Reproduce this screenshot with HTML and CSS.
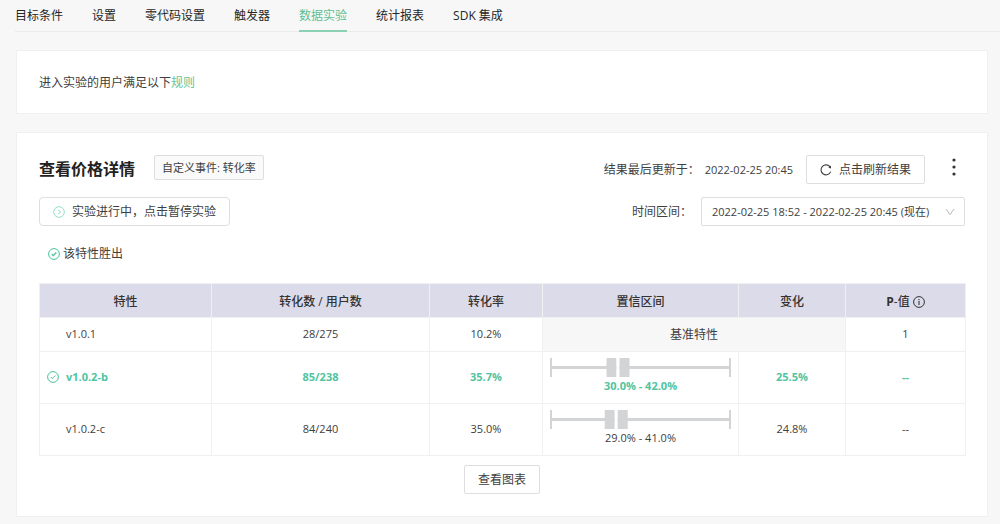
FILE: index.html
```html
<!DOCTYPE html>
<html lang="zh-CN">
<head>
<meta charset="utf-8">
<title>数据实验</title>
<link rel="stylesheet" href="styles.css">
</head>
<body>
<nav class="tabs">
  <a class="tab" href="#target">目标条件</a>
  <a class="tab" href="#settings">设置</a>
  <a class="tab" href="#zero-code">零代码设置</a>
  <a class="tab" href="#triggers">触发器</a>
  <a class="tab tab-active" href="#experiments" aria-current="page">数据实验</a>
  <a class="tab" href="#reports">统计报表</a>
  <a class="tab" href="#sdk">SDK 集成</a>
</nav>
<main class="page">
  <section class="card rule">进入实验的用户满足以下<a class="link" href="#rules">规则</a></section>

  <section class="card experiment">
    <div class="toolbar">
      <div class="group heading">
        <h1 class="title">查看价格详情</h1>
        <span class="tag">自定义事件: 转化率</span>
      </div>
      <div class="group">
        <span>结果最后更新于：</span>
        <time class="time" datetime="2022-02-25T20:45">2022-02-25 20:45</time>
        <button class="button refresh" type="button">
          <svg class="icon" viewBox="0 0 12 12" aria-hidden="true"><path d="M10.2 3.1A5 5 0 1 0 10.7 7.6" fill="none" stroke="#404040" stroke-width="1.1"/><path d="M11 1.4V4.4L8.3 3.7z" fill="#404040"/></svg>
          点击刷新结果
        </button>
        <button class="more" type="button" aria-label="更多">
          <svg width="4" height="18" viewBox="0 0 4 18" aria-hidden="true"><g fill="#333"><circle cx="2" cy="2" r="1.6"/><circle cx="2" cy="9" r="1.6"/><circle cx="2" cy="16" r="1.6"/></g></svg>
        </button>
      </div>
    </div>

    <div class="toolbar second">
      <button class="button pause" type="button">
        <svg class="icon" viewBox="0 0 12 12" aria-hidden="true"><g fill="none" stroke="#96e0c2"><circle cx="6" cy="6" r="5.3"/><path d="M5 4L7.6 6L5 8"/></g></svg>
        实验进行中，点击暂停实验
      </button>
      <div class="group range">
        <label for="range">时间区间：</label>
        <div class="select-box">
          <select class="select" id="range">
            <option>2022-02-25 18:52 - 2022-02-25 20:45 (现在)</option>
          </select>
          <svg class="chevron" viewBox="0 0 10 8" aria-hidden="true"><path d="M1 1L5 6.6L9 1" fill="none" stroke="#b8b8b8"/></svg>
        </div>
      </div>
    </div>

    <p class="legend">
      <svg class="icon" viewBox="0 0 12 12" aria-hidden="true"><g fill="none" stroke="#48c39b"><circle cx="6" cy="6" r="5.4"/><path d="M3.8 6L5.4 7.6L8.3 4.5" stroke-width="1.2"/></g></svg>
      该特性胜出
    </p>

    <table class="results">
      <colgroup>
        <col class="col-feature"><col class="col-users"><col class="col-rate"><col class="col-interval"><col class="col-change"><col class="col-p">
      </colgroup>
      <thead>
        <tr>
          <th>特性</th>
          <th>转化数 / 用户数</th>
          <th>转化率</th>
          <th>置信区间</th>
          <th>变化</th>
          <th><span class="with-icon"><span><b>P</b>-值</span><svg class="icon" viewBox="0 0 12 12" aria-hidden="true"><circle cx="6" cy="6" r="5.4" fill="none" stroke="#333"/><path d="M6 5.1V9M6 3V4.2" stroke="#333" stroke-width="1.1"/></svg></span></th>
        </tr>
      </thead>
      <tbody>
        <tr>
          <td><div class="feature"><span class="mark"></span>v1.0.1</div></td>
          <td>28/275</td>
          <td>10.2%</td>
          <td class="baseline" colspan="2">基准特性</td>
          <td>1</td>
        </tr>
        <tr class="winner">
          <td><div class="feature"><span class="mark"><svg class="icon" viewBox="0 0 12 12" role="img" aria-label="胜出"><g fill="none" stroke="#48c39b"><circle cx="6" cy="6" r="5.4"/><path d="M3.8 6L5.4 7.6L8.3 4.5"/></g></svg></span>v1.0.2-b</div></td>
          <td>85/238</td>
          <td>35.7%</td>
          <td>
            <svg class="gauge" aria-hidden="true"><rect y="8" width="100%" height="3"/><rect width="2" height="19"/><svg x="100%" overflow="visible"><rect x="-2" width="2" height="19"/></svg><svg x="34%" overflow="visible"><rect x="-5" width="10" height="19"/><rect class="gap" x="5" width="3" height="19"/><rect x="8" width="10" height="19"/></svg></svg>
            <div>30.0% - 42.0%</div>
          </td>
          <td>25.5%</td>
          <td>--</td>
        </tr>
        <tr>
          <td><div class="feature"><span class="mark"></span>v1.0.2-c</div></td>
          <td>84/240</td>
          <td>35.0%</td>
          <td>
            <svg class="gauge" aria-hidden="true"><rect y="8" width="100%" height="3"/><rect width="2" height="19"/><svg x="100%" overflow="visible"><rect x="-2" width="2" height="19"/></svg><svg x="33%" overflow="visible"><rect x="-5" width="10" height="19"/><rect class="gap" x="5" width="3" height="19"/><rect x="8" width="10" height="19"/></svg></svg>
            <div>29.0% - 41.0%</div>
          </td>
          <td>24.8%</td>
          <td>--</td>
        </tr>
      </tbody>
    </table>

    <div class="footer"><button class="button" type="button">查看图表</button></div>
  </section>
</main>
</body>
</html>
```
FILE: styles.css
```css
* {
  box-sizing: border-box;
}

body {
  margin: 0;
  background: #f7f7f7;
  color: #404040;
  font: 12px/18px "Open Sans", "Noto Sans CJK SC", sans-serif;
}

.tabs {
  display: flex;
  gap: 29px;
  height: 32px;
  margin-left: 15px;
  border-bottom: 1px solid #ebebeb;
}

.tab {
  height: 32px;
  padding-top: 7px;
  color: #262626;
  text-decoration: none;
}

.tab-active {
  border-bottom: 2px solid #8ad0b1;
  color: #5dbf94;
}

.page {
  display: flex;
  flex-direction: column;
  gap: 18px;
  padding: 18px 12px 8px 16px;
}

.card {
  padding: 22px;
  border: 1px solid #f0f0f0;
  background: #fff;
}

.rule {
  padding: 23px 22px 21px;
}

.link {
  color: #5fc495;
  text-decoration: none;
}

.toolbar,
.group {
  display: flex;
  align-items: center;
}

.toolbar {
  justify-content: space-between;
}

.second {
  margin-top: 13px;
}

.heading {
  align-items: flex-start;
  gap: 19px;
}

.range {
  gap: 9px;
}

.title {
  margin: 0;
  color: #222;
  font-size: 16px;
  line-height: 29px;
}

.tag {
  padding: 3px 7px 2px;
  border: 1px solid #dedede;
  border-radius: 2px;
  background: #fafafa;
  font-size: 11px;
}

.time {
  margin: 0 13px 0 5px;
  font-size: 11px;
}

.button {
  display: inline-flex;
  align-items: center;
  height: 29px;
  padding: 0 13px;
  border: 1px solid #dedede;
  border-radius: 2px;
  background: #fff;
  color: #404040;
  font: inherit;
}

.refresh {
  gap: 7px;
}

.pause {
  gap: 7px;
  border-radius: 4px;
}

.more {
  display: flex;
  margin: 0 9px 6px 18px;
  padding: 0 0 0 9px;
  border: 0;
  background: none;
}

.icon {
  display: block;
  flex: none;
  width: 12px;
  height: 12px;
}

.select-box {
  position: relative;
}

.select {
  display: block;
  width: 264px;
  height: 29px;
  padding: 0 24px 0 10px;
  appearance: none;
  border: 1px solid #dedede;
  border-radius: 2px;
  background: #fff;
  color: #404040;
  font: inherit;
  font-size: 11px;
}

.chevron {
  position: absolute;
  top: 11px;
  right: 10px;
  width: 10px;
  height: 8px;
  pointer-events: none;
}

.legend {
  display: flex;
  align-items: center;
  gap: 3px;
  margin: 19px 0 20px 9px;
}

.results {
  width: 100%;
  table-layout: fixed;
  border-collapse: collapse;
  font-size: 11px;
  text-align: center;
}

.results th,
.results td {
  height: 34px;
  padding: 6px 7px 8px;
  border: 1px solid #f0f0f0;
}

.results th {
  padding: 8px 7px 6px;
  background: #dcdbe9;
  color: #333;
  font-size: 12px;
  font-weight: 500;
}

.col-feature {
  width: 172px;
}

.col-users {
  width: 218px;
}

.col-rate {
  width: 113px;
}

.col-interval {
  width: 196px;
}

.col-change {
  width: 107px;
}

.col-p {
  width: 120px;
}

.with-icon {
  display: inline-flex;
  align-items: center;
  gap: 3px;
}

.feature {
  display: flex;
  align-items: center;
  gap: 7px;
}

.mark {
  width: 12px;
}

.results .baseline {
  padding: 7px;
  background: #f7f7f7;
  font-size: 12px;
}

.winner {
  color: #50c49f;
  font-weight: 700;
}

.gauge {
  display: block;
  width: 100%;
  height: 19px;
  fill: #d2d4d5;
}

.gap {
  fill: #fff;
}

.footer {
  display: flex;
  justify-content: center;
  margin-top: 9px;
}
```
